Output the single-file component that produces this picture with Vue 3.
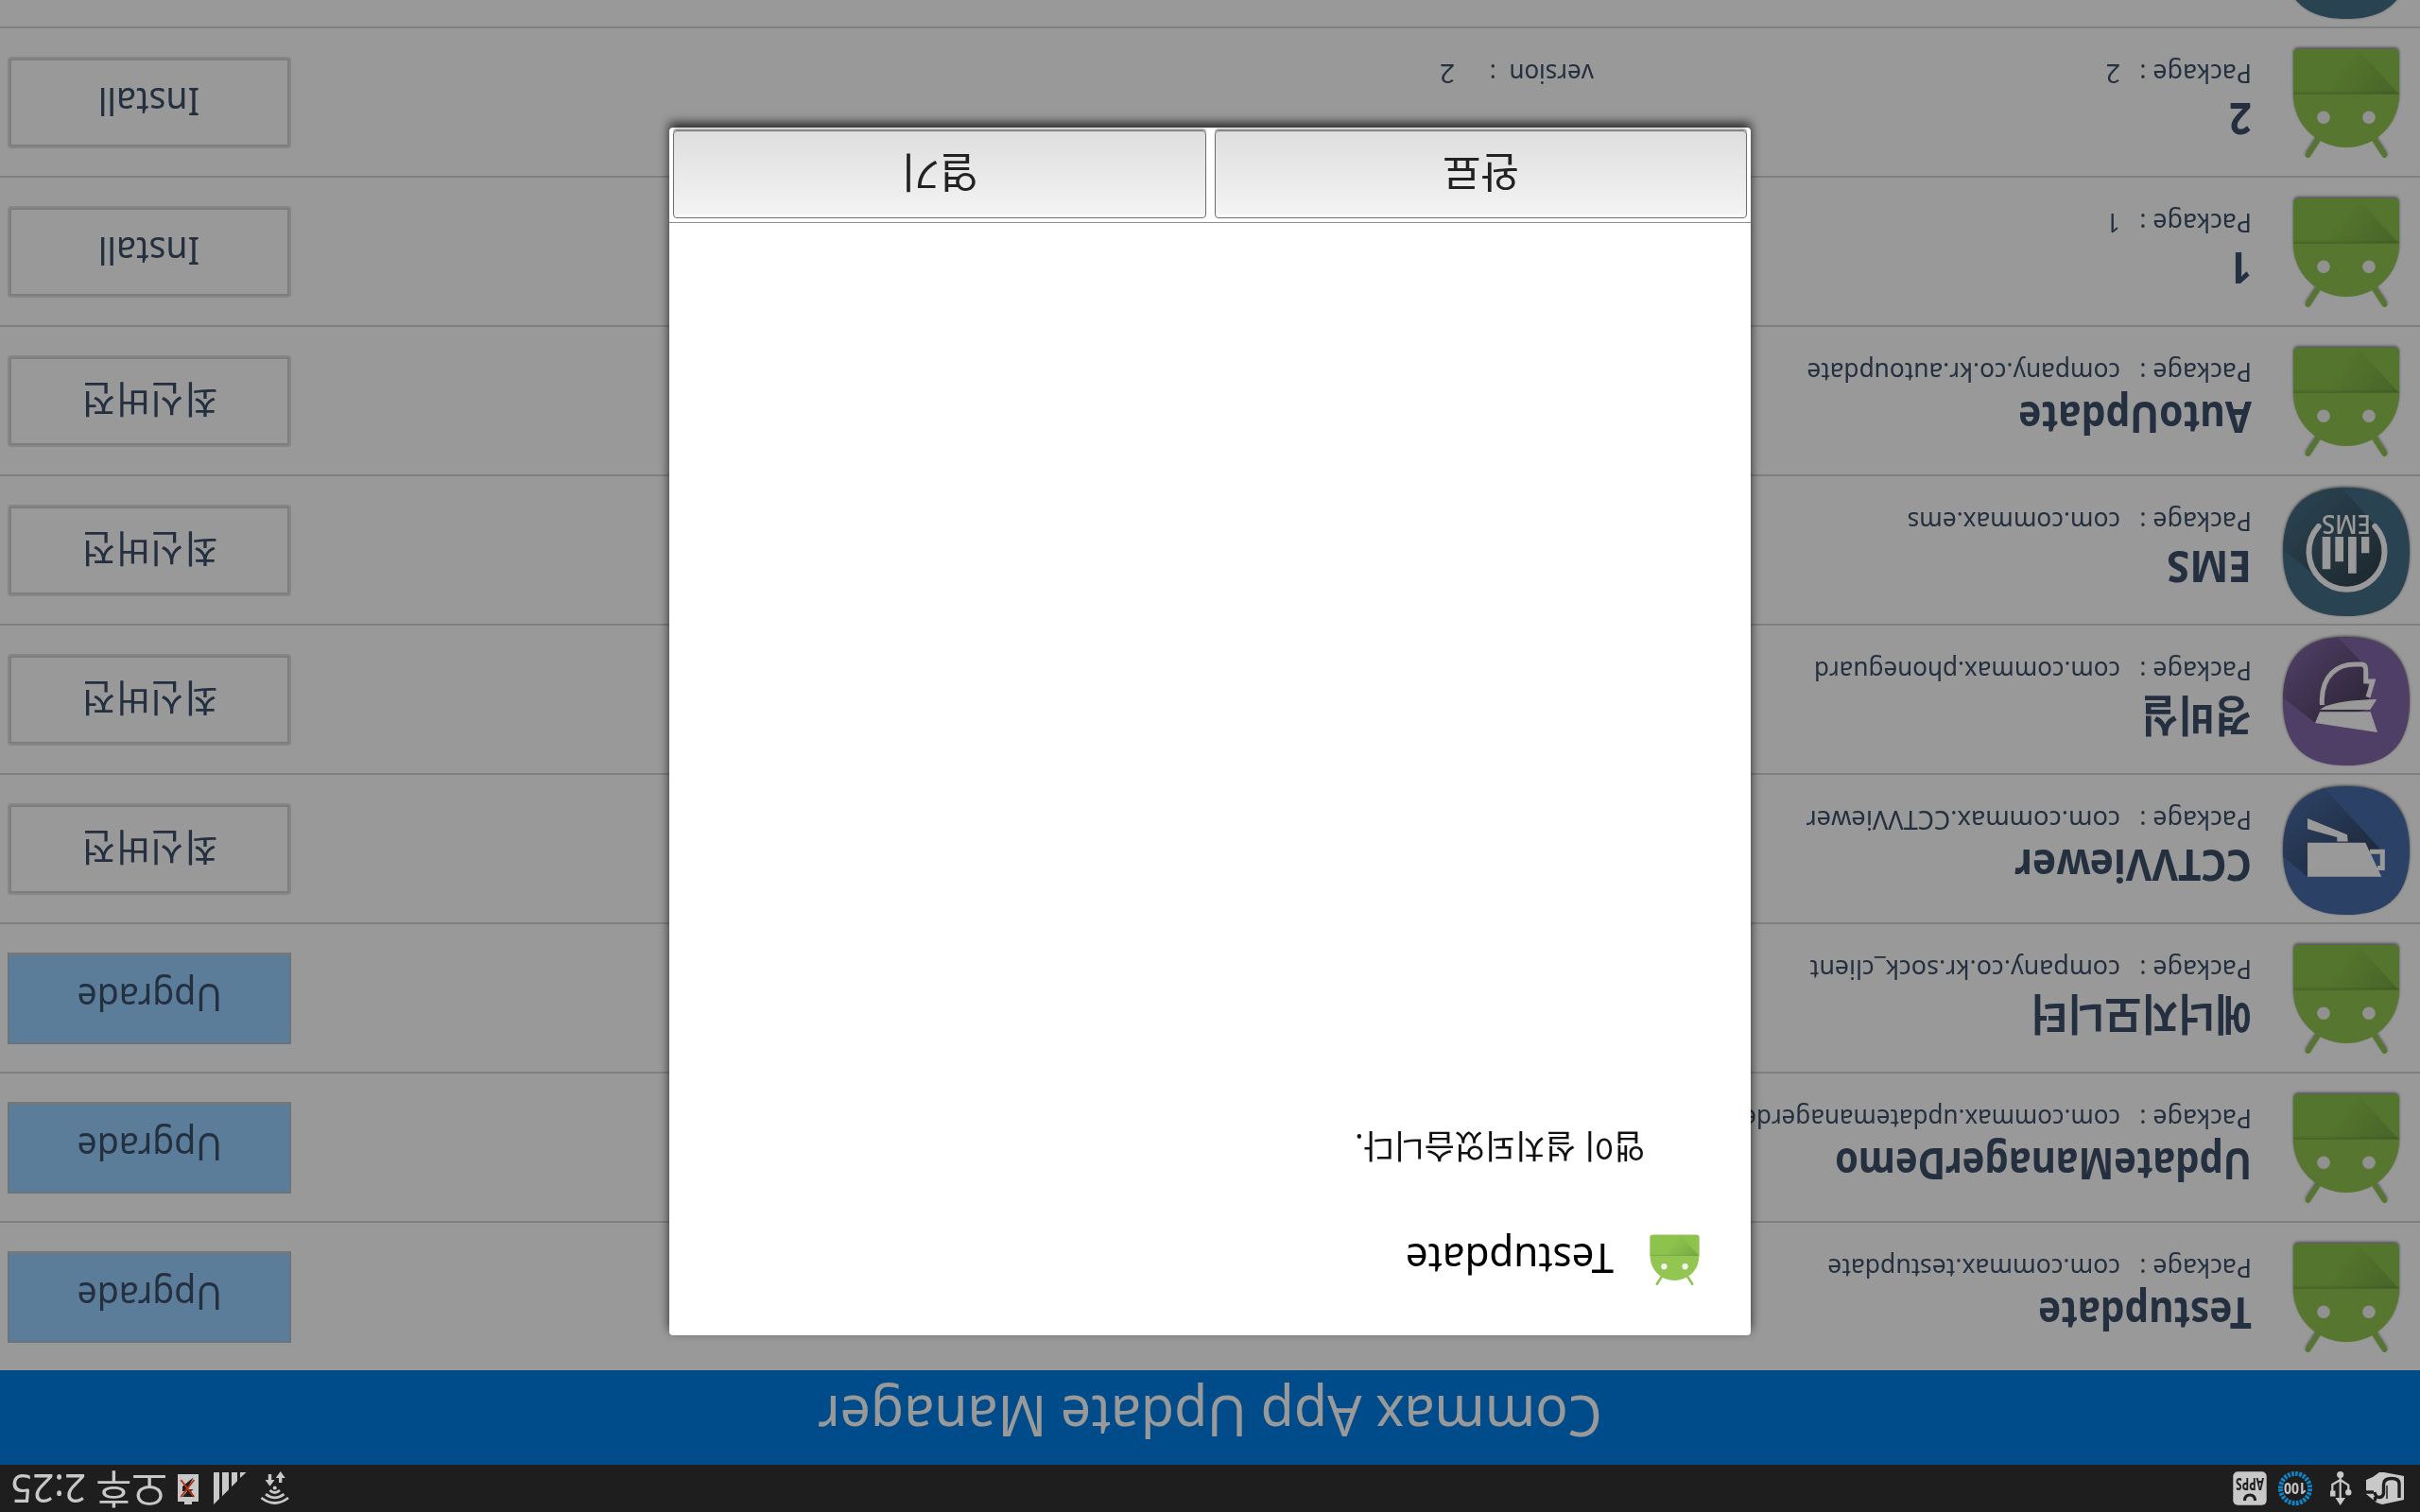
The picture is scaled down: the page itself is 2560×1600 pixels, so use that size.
<script setup>
// The panel is mounted upside down: the screen is laid out upright and turned as a whole.
const apps = [
  { name: 'Testupdate', fit: 0.88, pkg: 'com.commax.testupdate', pfit: 0.945, icon: 'robot', action: 'Upgrade' },
  { name: 'UpdateManagerDemo', fit: 0.868, pkg: 'com.commax.updatemanagerdemo', pfit: 0.928, icon: 'robot', action: 'Upgrade' },
  { name: '에너지모니터', fit: 0.92, pkg: 'company.co.kr.sock_client', pfit: 0.958, icon: 'robot', action: 'Upgrade' },
  { name: 'CCTVViewer', fit: 0.922, pkg: 'com.commax.CCTVViewer', pfit: 0.973, icon: 'cctv', action: '최신버전' },
  { name: '경비실', fit: 0.92, pkg: 'com.commax.phoneguard', pfit: 0.93, icon: 'guard', action: '최신버전' },
  { name: 'EMS', fit: 0.95, pkg: 'com.commax.ems', pfit: 0.938, icon: 'ems', action: '최신버전' },
  { name: 'AutoUpdate', fit: 0.887, pkg: 'company.co.kr.autoupdate', pfit: 0.937, icon: 'robot', action: '최신버전' },
  { name: '1', fit: 0.9, pkg: '1', pfit: 0.95, icon: 'robot', action: 'Install' },
  { name: '2', fit: 0.9, pkg: '2', pfit: 0.95, version: '2', icon: 'robot', action: 'Install' },
  { name: '', fit: 1, pkg: '', pfit: 1, icon: 'ems', action: '' },
]
</script>

<template>
  <div class="screen">
    <svg class="defs" width="0" height="0">
      <defs>
        <linearGradient id="fold" x1="0" y1="0" x2="1" y2="0.3">
          <stop offset="0" stop-color="#3a5a2c" stop-opacity=".26" />
          <stop offset=".65" stop-color="#3a5a2c" stop-opacity="0" />
        </linearGradient>
        <linearGradient id="crease" x1="0" y1="0" x2="0" y2="1">
          <stop offset="0" stop-color="#2f4a20" stop-opacity=".25" />
          <stop offset="1" stop-color="#2f4a20" stop-opacity="0" />
        </linearGradient>
        <linearGradient id="cast" x1=".2" y1=".2" x2=".85" y2=".85">
          <stop offset="0" stop-color="#222" stop-opacity=".5" />
          <stop offset="1" stop-color="#222" stop-opacity=".04" />
        </linearGradient>
        <clipPath id="tile"><path d="M67 0C112 0 134 22 134 68S112 136 67 136 0 114 0 68 22 0 67 0Z" /></clipPath>
        <symbol id="robot" viewBox="-3 0 118 121">
          <path d="M15.500 2.800 25.700 18.500M96.500 2.800 86.300 18.500" stroke="#8fc452" stroke-width="5.500" stroke-linecap="round" />
          <path d="M0 67C0 35 25 11 56 11s56 24 56 56v42q0 6-6 6H6q-6 0-6-6Z" fill="#92c651" />
          <path d="M0 68h112v41q0 6-6 6H6q-6 0-6-6Z" fill="#8bc34c" />
          <path d="M1 68 44 115H106q6 0 6-6V68Z" fill="url(#fold)" />
          <path d="M0 67h112v4H0Z" fill="url(#crease)" />
          <circle cx="32" cy="42.700" r="6.800" fill="#f2f2f2" /><circle cx="80" cy="42.700" r="6.800" fill="#f2f2f2" />
        </symbol>
        <symbol id="cctv" viewBox="0 0 134 136">
          <g clip-path="url(#tile)">
            <path d="M0 0H134V136H0Z" fill="#496eab" />
            <path d="M29.700 68 92 136H134V62L108 40Z" fill="url(#cast)" />
          </g>
          <path d="M108 76.300H46.700L29.700 40.300H108ZM108 102 66 84.700 65.300 77.500H76.700V82L108 90.700Z" fill="#fff" />
          <path d="M42 66.700H28.700V49.500H34" fill="none" stroke="#fff" stroke-width="5" />
        </symbol>
        <symbol id="guard" viewBox="0 0 134 136">
          <g clip-path="url(#tile)">
            <path d="M0 0H134V136H0Z" fill="#8468aa" />
            <path d="M46 104 76 136H134V72L100 45 42 60Z" fill="url(#cast)" />
          </g>
          <path d="M100 45 95 56.700H41.300L34 35ZM95 59 89 62.700Q69 69.500 34.700 70L41.700 59Z" fill="#fff" />
          <path d="M92.700 64V70C92 95 77 107 58 107H51Q46.300 107 46.300 101V89H39L44 72.300" fill="none" stroke="#fff" stroke-width="5" />
        </symbol>
        <symbol id="ems" viewBox="0 0 134 136">
          <g clip-path="url(#tile)">
            <path d="M0 0H134V136H0Z" fill="#477189" />
            <path d="M36 96 72 136H134V70L97 41A40 40 0 0 0 36 96Z" fill="url(#cast)" />
          </g>
          <path d="M36.700 95A40 40 0 1 1 96.300 95" fill="none" stroke="#fff" stroke-width="6" stroke-linecap="round" />
          <path d="M83.700 49.700H92.300V84H83.700ZM70 57.700H78.700V84H70ZM56.300 45.300H65V84H56.300ZM42.700 66.700H51V84H42.700Z" fill="#fff" />
          <text x="41" y="107.300" font-size="26.500" font-weight="500" textLength="52" lengthAdjust="spacingAndGlyphs" fill="#fff">EMS</text>
        </symbol>
      </defs>
    </svg>

    <header class="status">
      <svg class="left" width="210" height="50" viewBox="0 0 210 50">
        <path d="M17 13 40 8 46 10 57 19V34L50 37 43 42H38L17 38Z" fill="#c8c8c8" />
        <path d="M22 15V30Q22 35.500 30 35.500 38.500 35.500 38.500 29V20Q39 15.500 43.500 15.500 47 15.500 48 21M47.500 11.500V16M57 21H49" fill="none" stroke="#1e1e1e" stroke-width="3.400" />
        <path d="M35 14V28" fill="none" stroke="#1e1e1e" stroke-width="1.500" />
        <path d="M84.300 40V13M84.300 34 75.700 28.500V21M84.300 34 92.700 29V20" fill="none" stroke="#c8c8c8" stroke-width="2.200" />
        <circle cx="84.300" cy="39.500" r="3.600" fill="#c8c8c8" /><circle cx="75.700" cy="20.700" r="3.200" fill="#c8c8c8" />
        <path d="M84.300 7 89.500 15H79ZM89.500 16.500H95V22.500H89.500Z" fill="#c8c8c8" />
        <circle cx="132" cy="25" r="15.600" fill="none" stroke="#0c86cc" stroke-width="5" stroke-dasharray="2.700 1.384" />
        <text x="120" y="31" font-size="16" font-weight="700" textLength="24" lengthAdjust="spacingAndGlyphs" fill="#c8c8c8">100</text>
        <rect x="162.300" y="7.300" width="35.400" height="35.400" rx="5" fill="#c8c8c8" />
        <path d="M174.500 12Q174.500 18 180 18T185.500 12" fill="none" stroke="#1e1e1e" stroke-width="3" />
        <text x="165" y="36.500" font-size="18" font-weight="700" textLength="30" lengthAdjust="spacingAndGlyphs" fill="#1e1e1e">APPS</text>
      </svg>
      <div class="right">
        <svg width="125" height="50" viewBox="10 0 125 50">
          <g fill="#c8c8c8">
            <path d="M94 42V8L88 14V42ZM85 42V16.700L78 23.700V42ZM75 42V26.700L69 32.700V42ZM66 42V36L59.500 42Z" />
            <path d="M110 11H117V8H125V11H132V40H110Z" />
            <path d="M34.500 27.300 39.500 34H36.200V40H32.800V34H29.500ZM23.300 43 18.300 36H21.700V31H25V36H28.300Z" />
            <circle cx="29.300" cy="25.500" r="2" />
          </g>
          <path d="M15 15Q29.300 4 43.600 15M19.500 18.800Q29.300 11.500 39 18.800M24 23Q29.300 18 34.600 23" fill="none" stroke="#c8c8c8" stroke-width="2.700" />
          <path d="M115.500 36.500 127 27V22H122L127 16H115.500L118 22 115.500 24H122Z" fill="#1e1e1e" />
          <path d="M114.700 34 128.700 16M114.700 16 128.700 34" stroke="#b8320f" stroke-width="2" />
        </svg>
        <span class="ampm">오후</span><span class="time">2:25</span>
      </div>
    </header>

    <main class="app">
      <h1 class="title"><span>Commax App Update Manager</span></h1>
      <ul class="list">
        <li v-for="(a, i) in apps" :key="i" class="row">
          <div class="iconcell">
            <svg v-if="a.icon === 'robot'" class="robot" width="118" height="121"><use href="#robot" /></svg>
            <svg v-else class="tile" width="134" height="136"><use :href="'#' + a.icon" /></svg>
          </div>
          <template v-if="a.name">
            <div class="info">
              <div class="name"><span :style="{ transform: `scaleX(${a.fit})` }">{{ a.name }}</span></div>
              <div class="meta">
                <span class="label"><i>Package :</i></span><span class="value"><i :style="{ transform: `scaleX(${a.pfit})` }">{{ a.pkg }}</i></span>
                <template v-if="a.version"><span class="vlabel"><i>version&nbsp; :</i></span><span>{{ a.version }}</span></template>
              </div>
            </div>
            <button class="action" :class="{ upgrade: a.action === 'Upgrade', ko: a.action === '최신버전' }"><span>{{ a.action }}</span></button>
          </template>
        </li>
      </ul>
    </main>

    <div class="scrim">
      <section class="dialog">
        <div class="head">
          <svg width="55" height="56"><use href="#robot" /></svg>
          <h2><span>Testupdate</span></h2>
        </div>
        <p class="message">앱이 설치되었습니다.</p>
        <footer class="buttons">
          <button>완료</button>
          <button>열기</button>
        </footer>
      </section>
    </div>
  </div>
</template>

<style>
body { margin: 0; background: #999; overflow: hidden; }
</style>

<style scoped>
.screen {
  position: relative;
  width: 2560px;
  height: 1600px;
  overflow: hidden;
  display: flex;
  flex-direction: column;
  transform: rotate(180deg);
  background: #fff;
  color: #3c5069;
  font-family: "Noto Sans", "Noto Sans CJK KR", sans-serif;
}
.screen * { box-sizing: border-box; }
.defs { position: absolute; }
span { display: inline-block; white-space: pre; }
button { font: inherit; color: inherit; margin: 0; padding: 0; background: none; }

.status {
  position: relative;
  z-index: 2;
  flex: none;
  height: 50px;
  display: flex;
  justify-content: space-between;
  background: #1e1e1e;
  color: #c8c8c8;
}
.right { display: flex; font-size: 42px; line-height: 47px; }
.ampm { width: 77px; margin-left: 8px; transform: scaleX(.98); transform-origin: left; }
.time { width: 83px; margin: 0 8px 0 9px; transform: scaleX(.955); transform-origin: left; }

.app { flex: 1; min-height: 0; }
.title {
  margin: 0;
  height: 100px;
  background: #007fe6;
  color: #fff;
  text-align: center;
  font-weight: 400;
  font-size: 60px;
  line-height: 101px;
}
.title span { transform: scaleX(.9515); }

.list { margin: 0; padding: 0; list-style: none; }
.row { display: flex; height: 158px; border-bottom: 2px solid #d4d4d4; }
.iconcell { flex: none; width: 178px; }
.iconcell svg { display: block; overflow: visible; }
.robot { margin: 19px 0 0 19px; filter: drop-shadow(0 2px 1.5px rgba(0, 0, 0, .45)); }
.tile { margin: 8px 0 0 11px; filter: drop-shadow(0 1px 1.5px rgba(0, 0, 0, .55)); }
.info { flex: 1; padding-top: 29px; }
.name { height: 60px; font-size: 46px; line-height: 60px; font-weight: 700; }
.name span { transform-origin: left; }
.meta { display: flex; font-size: 28px; line-height: 37px; white-space: pre; font-kerning: none; }
.meta i { display: inline-block; font-style: normal; transform: scaleX(.952); transform-origin: left; }
.label { width: 139px; }
.value { width: 557px; }
.vlabel { width: 147px; }
.vlabel i { transform: scaleX(.93); }
.action {
  flex: none;
  width: 300px;
  height: 97px;
  margin: 29px 8px 0 0;
  border: 4px solid #dfdfdf;
  outline: 2px solid #d2d2d2;
  outline-offset: -4px;
  border-radius: 4px;
  font-size: 40px;
  line-height: 89px;
  text-align: center;
}
.action span { transform: scaleX(.935); }
.action.ko { line-height: 91px; }
.action.ko span { transform: scaleX(.983); }
.action.upgrade {
  border: 2px solid #b0c4d3;
  border-bottom: 3px solid #c4c8cb;
  outline: none;
  border-radius: 0;
  background: #99d0ff;
  line-height: 94px;
}

.scrim { position: absolute; inset: 50px 0 0; background: rgba(0, 0, 0, .4); }
.dialog {
  position: relative;
  display: flex;
  flex-direction: column;
  width: 1144px;
  height: 1278px;
  margin: 137px auto 0;
  border-radius: 4px;
  background: #fff;
  color: #000;
  box-shadow: 0 5px 11px rgba(0, 0, 0, .75);
}
.head { display: flex; padding: 53px 0 0 53px; height: 110px; }
.head svg { flex: none; margin-right: 39px; }
h2 { margin: -2px 0 0 -2px; font-weight: 400; font-size: 43px; line-height: 60px; }
h2 span { transform: scaleX(.98); transform-origin: left; }
.message { flex: 1; margin: 70px 0 0 112px; color: #111; font-size: 35px; line-height: 40px; letter-spacing: -.15px; }
.buttons { display: flex; gap: 9px; height: 101px; padding: 4px; border-top: 1px solid #8c8c8c; }
.buttons button {
  flex: 1;
  height: 93px;
  border: 1px solid #6f6f6f;
  border-radius: 4px;
  background: linear-gradient(#fff, #f3f3f3 5%, #dedede);
  box-shadow: 0 2px 1px rgba(0, 0, 0, .35);
  color: #222;
  font-size: 44px;
  line-height: 95px;
}
.buttons button:first-child { flex: 0 0 563px; }
</style>
